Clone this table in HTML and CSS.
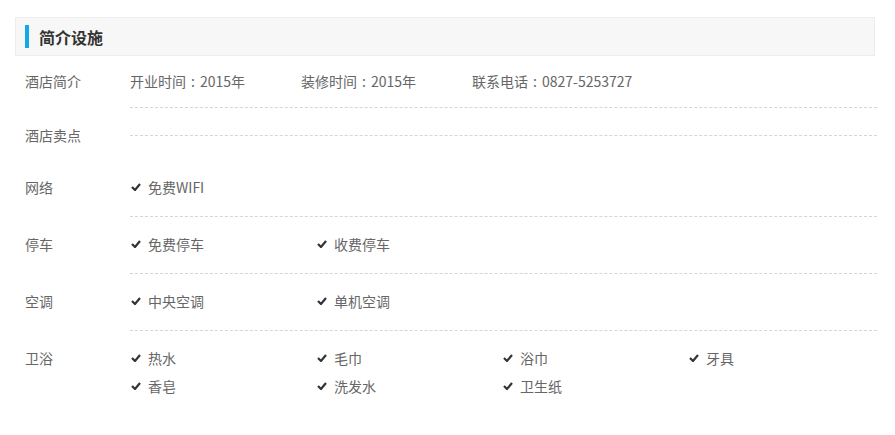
FILE: index.html
```html
<!DOCTYPE html>
<html lang="zh-CN">
  <head>
    <meta charset="UTF-8" />
    <meta name="viewport" content="width=device-width, initial-scale=1.0" />
    <title>简介设施</title>
    <link rel="stylesheet" href="styles.css">
  </head>
  <body>
    <div class="box">
      <div class="box-title"><span class="bar"></span>简介设施</div>

      <div class="row row-intro">
        <div class="label">酒店简介</div>
        <div class="content">
          <span class="info">开业时间<span class="colon">:</span>2015年</span>
          <span class="info">装修时间<span class="colon">:</span>2015年</span>
          <span>联系电话<span class="colon">:</span>0827-5253727</span>
        </div>
      </div>

      <div class="row row-empty">
        <div class="label">酒店卖点</div>
        <div class="content"></div>
      </div>

      <div class="row">
        <div class="label">网络</div>
        <div class="content">
          <span class="item"><svg class="check" viewBox="0 0 10 8"><polyline points="1,4 4,7 9,1" /></svg>免费WIFI</span>
        </div>
      </div>

      <div class="row">
        <div class="label">停车</div>
        <div class="content">
          <span class="item"><svg class="check" viewBox="0 0 10 8"><polyline points="1,4 4,7 9,1" /></svg>免费停车</span>
          <span class="item"><svg class="check" viewBox="0 0 10 8"><polyline points="1,4 4,7 9,1" /></svg>收费停车</span>
        </div>
      </div>

      <div class="row">
        <div class="label">空调</div>
        <div class="content">
          <span class="item"><svg class="check" viewBox="0 0 10 8"><polyline points="1,4 4,7 9,1" /></svg>中央空调</span>
          <span class="item"><svg class="check" viewBox="0 0 10 8"><polyline points="1,4 4,7 9,1" /></svg>单机空调</span>
        </div>
      </div>

      <div class="row row-last">
        <div class="label">卫浴</div>
        <div class="content">
          <span class="item"><svg class="check" viewBox="0 0 10 8"><polyline points="1,4 4,7 9,1" /></svg>热水</span>
          <span class="item"><svg class="check" viewBox="0 0 10 8"><polyline points="1,4 4,7 9,1" /></svg>毛巾</span>
          <span class="item"><svg class="check" viewBox="0 0 10 8"><polyline points="1,4 4,7 9,1" /></svg>浴巾</span>
          <span class="item"><svg class="check" viewBox="0 0 10 8"><polyline points="1,4 4,7 9,1" /></svg>牙具</span>
          <span class="item"><svg class="check" viewBox="0 0 10 8"><polyline points="1,4 4,7 9,1" /></svg>香皂</span>
          <span class="item"><svg class="check" viewBox="0 0 10 8"><polyline points="1,4 4,7 9,1" /></svg>洗发水</span>
          <span class="item"><svg class="check" viewBox="0 0 10 8"><polyline points="1,4 4,7 9,1" /></svg>卫生纸</span>
        </div>
      </div>
    </div>
  </body>
</html>
```

FILE: styles.css
```css
body {
  margin: 0;
  background-color: #fff;
  font-family: "Noto Sans CJK SC", "Microsoft YaHei", sans-serif;
  font-size: 14px;
  color: #666;
}
.box {
  width: 860px;
  margin: 17px 0 0 15px;
}
.box-title {
  display: flex;
  align-items: center;
  height: 37px;
  padding-left: 9px;
  background-color: #f7f7f7;
  border: 1px solid #ededed;
  font-size: 16px;
  font-weight: bold;
  color: #333;
}
.bar {
  width: 4px;
  height: 23px;
  margin-right: 10px;
  background-color: #14a9e6;
}
.row {
  display: flex;
  align-items: flex-start;
  line-height: 28px;
}
.label {
  width: 115px;
  flex-shrink: 0;
  padding: 13px 0 0 10px;
  box-sizing: border-box;
}
.content {
  flex: 1;
  display: flex;
  flex-wrap: wrap;
  margin-right: -2px;
  padding: 13px 0 15px;
  border-bottom: 1px dashed #d6d6d6;
}
.row-intro .label {
  padding-top: 11px;
}
.row-intro .content {
  line-height: 24px;
  padding: 13px 0 14px;
}
.info {
  width: 171px;
}
.colon {
  display: inline-block;
  width: 14px;
  text-align: center;
}
.row-empty {
  height: 52px;
}
.row-empty .content {
  padding: 0;
  height: 28px;
  box-sizing: border-box;
}
.row-last .content {
  border-bottom: none;
}
.item {
  display: flex;
  align-items: center;
  width: 186px;
}
.check {
  width: 10px;
  height: 8px;
  margin: 0 7px 0 1px;
  fill: none;
  stroke: #333;
  stroke-width: 2.2;
}
```
